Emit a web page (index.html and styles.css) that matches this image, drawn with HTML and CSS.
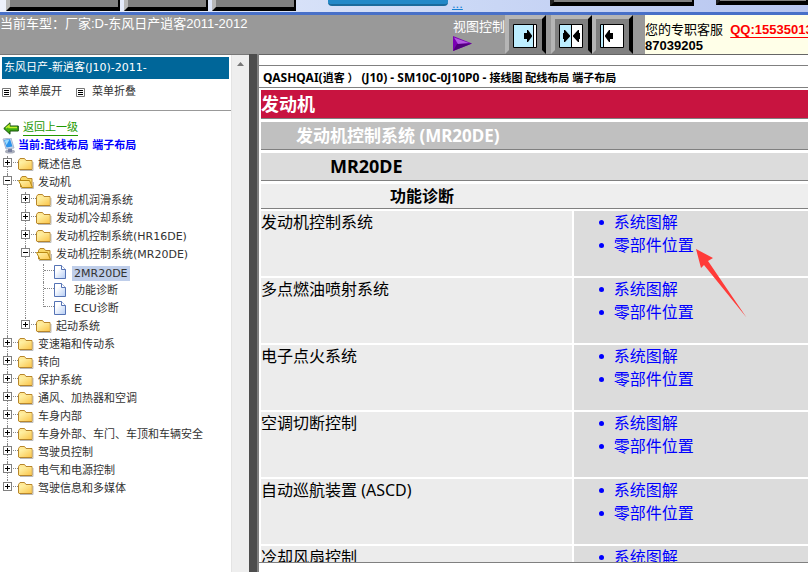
FILE: index.html
```html
<!DOCTYPE html>
<html lang="zh-CN">
<head>
<meta charset="utf-8">
<title>QASHQAI (J10) - 配线布局 端子布局</title>
<link rel="stylesheet" href="styles.css">
</head>
<body>
<svg class="defs" aria-hidden="true">
  <defs>
    <linearGradient id="gold" x1="0" y1="0" x2="1" y2="1"><stop offset="0" stop-color="#fff6b0"/><stop offset="1" stop-color="#fbc64c"/></linearGradient>
    <linearGradient id="paper" x1="0" y1="0" x2="1" y2="1"><stop offset="0.3" stop-color="#fff"/><stop offset="1" stop-color="#b4ccf4"/></linearGradient>
    <symbol id="folder" viewBox="0 0 16 16">
      <path d="M2 13.500h13V5" fill="none" stroke="#bbb"/>
      <path d="M.5 12V3.500L2 1.500h4.500L8 3.500h6v9H1z" fill="#ffe995" stroke="#b8862b"/>
      <path d="M1.500 4.500h12V12h-12z" fill="url(#gold)"/>
    </symbol>
    <symbol id="folder-open" viewBox="0 0 16 16">
      <path d="M3 13.500h12.500V7" fill="none" stroke="#bbb"/>
      <path d="M2.500 12V3.500L4 1.500h4L9.500 3.500h4.500v9z" fill="#f8d765" stroke="#b8862b"/>
      <path d="M.5 5.500h11l3 7H4z" fill="url(#gold)" stroke="#b98a14"/>
    </symbol>
    <symbol id="page" viewBox="0 0 16 16">
      <path d="M.5.500h7l4 4v9H.5z" fill="url(#paper)" stroke="#5573b5"/>
      <path d="M7.500.500v4h4" fill="#fff" stroke="#5573b5"/>
    </symbol>
    <symbol id="menu" viewBox="0 0 9 9">
      <path d="M.5.500h8v8h-8z" fill="#fff" stroke="#777"/>
      <path d="M2 2.500h5M2 4.500h5M2 6.500h5" stroke="#000"/>
    </symbol>
  </defs>
</svg>

<div class="tabs">
  <button class="tab" aria-label="菜单一"></button>
  <button class="tab tab-narrow" aria-label="菜单二"></button>
  <button class="tab tab-narrow" aria-label="菜单三"></button>
  <button class="tab-active" aria-label="当前页"></button>
  <a class="more" href="#">...</a>
  <button class="tab tab-outer" aria-label="菜单四"></button>
  <button class="tab tab-last" aria-label="菜单五"></button>
</div>

<header class="toolbar">
  <p class="model">当前车型：厂家:D-东风日产逍客2011-2012</p>
  <div class="view">
    <span>视图控制</span>
    <svg width="20" height="15" viewBox="0 0 20 15" aria-hidden="true"><path d="M0 0l19 7.500L0 15z" fill="#7a00b4"/><path d="M1 1.500l15 5.500L5 8z" fill="#b45ae0"/><path d="M0 15l4-7 15-.5z" fill="#51007c"/></svg>
  </div>
  <div class="tools">
    <button class="tool" aria-label="展开左栏"><svg width="24" height="24" viewBox="0 0 24 24"><path d="M.5.500h23v23H.5z" fill="#fff" stroke="#000"/><path d="M1 1h19v22H1z" fill="#bdeeff"/><path d="M20.500 1v22" stroke="#000"/><path d="M11 9h3V6h1l4 5.500v1L15 18h-1v-3h-3z"/></svg></button>
    <button class="tool" aria-label="左右平分"><svg width="24" height="24" viewBox="0 0 24 24"><path d="M.5.500h23v23H.5z" fill="#fff" stroke="#000"/><path d="M1 1h11v22H1z" fill="#bdeeff"/><path d="M12.500 1v22" stroke="#000"/><path d="M4 9h1V6h1l5 5.500v1L6 18H5v-3H4zM21 9h-1V6h-1l-5 5.500v1l5 5.500h1v-3h1z"/></svg></button>
    <button class="tool" aria-label="展开右栏"><svg width="24" height="24" viewBox="0 0 24 24"><path d="M.5.500h23v23H.5z" fill="#fff" stroke="#000"/><path d="M1 1h2v22H1z" fill="#bdeeff"/><path d="M3.500 1v22" stroke="#000"/><path d="M13 9h-3V6H9l-4 5.500v1L9 18h1v-3h3z"/></svg></button>
  </div>
  <div class="service">您的专职客服&nbsp; <a href="#">QQ:1553501387</a><br><b>87039205</b></div>
</header>

<div class="frames">
  <nav class="sidebar">
    <div class="panel">
      <h2 class="car">东风日产-新逍客(J10)-2011-</h2>
      <div class="actions">
        <button><svg width="9" height="9"><use href="#menu"/></svg>菜单展开</button>
        <button><svg width="9" height="9"><use href="#menu"/></svg>菜单折叠</button>
      </div>
      <a class="back" href="#"><svg width="16" height="13" viewBox="0 0 16 13"><path d="M.8 6.500L7 .8V4h8.300v5H7v3.200z" fill="#3fae14" stroke="#17500a"/><path d="M3 6l3-2.500V5.500h8" fill="none" stroke="#c4f02c" stroke-width="1.500"/></svg><span>返回上一级</span></a>
      <div class="current"><svg width="14" height="16" viewBox="0 0 14 16"><ellipse cx="8" cy="13.500" rx="5" ry="2" fill="#a9aebb"/><path d="M6 10h4v4H6z" fill="#777f9d"/><path d="M1 1l8-1 3 10-8 1z" fill="#d1daea" stroke="#a9b6d0"/><path d="M2 2l6-1 2.500 7.500-6 1z" fill="#2d94ec"/><path d="M2.500 2.500l5-1-3 5.500z" fill="#9fdcff"/></svg><b>当前:配线布局 端子布局</b></div>
      <ul class="tree">
        <li><div class="row"><button class="toggle plus" aria-label="展开"></button><svg class="icon"><use href="#folder"/></svg><a href="#">概述信息</a></div></li>
        <li><div class="row"><button class="toggle" aria-label="折叠"></button><svg class="icon"><use href="#folder-open"/></svg><a href="#">发动机</a></div>
          <ul>
            <li><div class="row"><button class="toggle plus" aria-label="展开"></button><svg class="icon"><use href="#folder"/></svg><a href="#">发动机润滑系统</a></div></li>
            <li><div class="row"><button class="toggle plus" aria-label="展开"></button><svg class="icon"><use href="#folder"/></svg><a href="#">发动机冷却系统</a></div></li>
            <li><div class="row"><button class="toggle plus" aria-label="展开"></button><svg class="icon"><use href="#folder"/></svg><a href="#">发动机控制系统(HR16DE)</a></div></li>
            <li><div class="row"><button class="toggle" aria-label="折叠"></button><svg class="icon"><use href="#folder-open"/></svg><a href="#">发动机控制系统(MR20DE)</a></div>
              <ul>
                <li><div class="row leaf"><svg class="icon"><use href="#page"/></svg><a class="selected" href="#">2MR20DE</a></div></li>
                <li><div class="row leaf"><svg class="icon"><use href="#page"/></svg><a href="#">功能诊断</a></div></li>
                <li><div class="row leaf"><svg class="icon"><use href="#page"/></svg><a href="#">ECU诊断</a></div></li>
              </ul>
            </li>
            <li><div class="row"><button class="toggle plus" aria-label="展开"></button><svg class="icon"><use href="#folder"/></svg><a href="#">起动系统</a></div></li>
          </ul>
        </li>
        <li><div class="row"><button class="toggle plus" aria-label="展开"></button><svg class="icon"><use href="#folder"/></svg><a href="#">变速箱和传动系</a></div></li>
        <li><div class="row"><button class="toggle plus" aria-label="展开"></button><svg class="icon"><use href="#folder"/></svg><a href="#">转向</a></div></li>
        <li><div class="row"><button class="toggle plus" aria-label="展开"></button><svg class="icon"><use href="#folder"/></svg><a href="#">保护系统</a></div></li>
        <li><div class="row"><button class="toggle plus" aria-label="展开"></button><svg class="icon"><use href="#folder"/></svg><a href="#">通风、加热器和空调</a></div></li>
        <li><div class="row"><button class="toggle plus" aria-label="展开"></button><svg class="icon"><use href="#folder"/></svg><a href="#">车身内部</a></div></li>
        <li><div class="row"><button class="toggle plus" aria-label="展开"></button><svg class="icon"><use href="#folder"/></svg><a href="#">车身外部、车门、车顶和车辆安全</a></div></li>
        <li><div class="row"><button class="toggle plus" aria-label="展开"></button><svg class="icon"><use href="#folder"/></svg><a href="#">驾驶员控制</a></div></li>
        <li><div class="row"><button class="toggle plus" aria-label="展开"></button><svg class="icon"><use href="#folder"/></svg><a href="#">电气和电源控制</a></div></li>
        <li><div class="row"><button class="toggle plus" aria-label="展开"></button><svg class="icon"><use href="#folder"/></svg><a href="#">驾驶信息和多媒体</a></div></li>
      </ul>
    </div>
    <div class="scrollbar"><svg width="7" height="4" viewBox="0 0 7 4"><path d="M0 4l3.500-4L7 4z" fill="#777"/></svg></div>
  </nav>
  <div class="splitter"></div>
  <main class="content">
    <p class="path"><span>QASHQAI(</span>逍客 ） <span>(J10) - SM10C-0J10P0 - </span>接线图 配线布局 端子布局</p>
    <div class="document">
      <h1>发动机</h1>
      <h2>发动机控制系统 (MR20DE)</h2>
      <h3>MR20DE</h3>
      <h4>功能诊断</h4>
      <table>
        <tr><th scope="row">发动机控制系统</th><td><ul><li><a href="#">系统图解</a></li><li class="marked"><a href="#">零部件位置</a><svg class="pointer" width="53" height="71" viewBox="0 0 53 71" aria-hidden="true"><path d="M1 1l17 9-5 3L51.500 69.500 9 17l-3 3z" fill="#ff3b38"/></svg></li></ul></td></tr>
        <tr><th scope="row">多点燃油喷射系统</th><td><ul><li><a href="#">系统图解</a></li><li><a href="#">零部件位置</a></li></ul></td></tr>
        <tr><th scope="row">电子点火系统</th><td><ul><li><a href="#">系统图解</a></li><li><a href="#">零部件位置</a></li></ul></td></tr>
        <tr><th scope="row">空调切断控制</th><td><ul><li><a href="#">系统图解</a></li><li><a href="#">零部件位置</a></li></ul></td></tr>
        <tr><th scope="row">自动巡航装置 (ASCD)</th><td><ul><li><a href="#">系统图解</a></li><li><a href="#">零部件位置</a></li></ul></td></tr>
        <tr><th scope="row">冷却风扇控制</th><td><ul><li><a href="#">系统图解</a></li><li><a href="#">零部件位置</a></li></ul></td></tr>
      </table>
    </div>
  </main>
</div>
</body>
</html>
```
FILE: styles.css
```css
* { box-sizing: border-box; }

body {
  margin: 0;
  height: 100vh;
  display: flex;
  flex-direction: column;
  overflow: hidden;
  background: #fff;
  font-family: "Noto Sans", "Noto Sans CJK SC", sans-serif;
}

h1, h2, h3, h4, p, ul { margin: 0; padding: 0; }
button { padding: 0; border: 0; background: none; font: inherit; color: inherit; }
.defs { position: absolute; width: 0; height: 0; }

/* Top tabs */
.tabs {
  flex: none;
  height: 15px;
  display: flex;
  align-items: flex-start;
  gap: 4px;
  padding-left: 6px;
  overflow: hidden;
  border-bottom: 3px solid #4870c8;
  background: linear-gradient(90deg, #edf1fc, #ccd9f6 55%, #b7c5ef);
}
.tab {
  flex: none;
  width: 114px;
  height: 11px;
  background: #808080;
  border: solid #000;
  border-width: 0 2px 4px 4px;
  border-left-color: #b8b8b8;
}
.tab-narrow { width: 84px; }
.tab-active {
  flex: none;
  width: 120px;
  height: 6px;
  margin-left: 28px;
  border-radius: 0 0 4px 4px;
  background: #2389c8;
  border-bottom: 2px solid #1b6b9d;
}
.more {
  width: 12px;
  color: #1682d4;
  font: 13px/8px "Liberation Sans", sans-serif;
}
.tab-outer { width: 144px; height: 6px; margin-left: 82px; border-left-color: #222; }
.tab-last { flex: 1 0 92px; height: 5px; margin-left: 18px; border-left-color: #222; }

/* Toolbar */
.toolbar {
  flex: none;
  height: 39px;
  display: flex;
  overflow: hidden;
  background: #999;
  color: #fff;
  font: 13px/17px "Liberation Sans", "Noto Sans CJK SC", sans-serif;
}
.model { flex: 0 0 453px; white-space: nowrap; }
.view { flex: 0 0 52px; padding-top: 3px; white-space: nowrap; }
.view svg { display: block; margin-top: 1px; }
.tools { flex: 0 0 140px; display: flex; }
.tool {
  width: 41px;
  height: 39px;
  padding: 5px 4px 2px;
  border: 4px solid #000;
  border-color: #b5b5b5 #000 #808080 #b5b5b5;
  background: #808080;
}
.tool:first-child { margin-right: 5px; }
.tool svg { display: block; }
.service {
  flex: 1;
  padding-top: 7px;
  overflow: hidden;
  background: #ffffe8;
  color: #000;
  line-height: 16px;
  white-space: nowrap;
}
.service a { color: #f00; font-weight: bold; text-underline-offset: 3px; }

/* Frames */
.frames { flex: 1; min-height: 0; display: flex; }
.sidebar { flex: 0 0 249px; display: flex; border-top: 1px solid #777; }
.panel {
  flex: 1;
  padding-top: 2px;
  color: #333;
  font: 11px/18px "DejaVu Sans", "Noto Sans CJK SC", sans-serif;
}
.car {
  margin: 0 2px;
  padding-left: 2px;
  background: #069;
  color: #fff;
  font-size: 11px;
  font-weight: normal;
  line-height: 22px;
}
.actions {
  display: flex;
  gap: 14px;
  height: 32px;
  padding: 4px 2px;
  border-bottom: 1px solid #999;
}
.actions button { display: flex; align-items: center; gap: 7px; height: 18px; }
.back { display: flex; align-items: center; gap: 4px; height: 16px; margin-top: 9px; padding-left: 3px; color: #290; text-decoration: none; }
.back span { border-bottom: 1px solid #290; line-height: 14px; }
.current { display: flex; align-items: center; gap: 2px; padding: 1px 2px; color: #00f; }
.scrollbar {
  flex: 0 0 18px;
  padding: 7px 5px;
  background: #eee;
  border-left: 1px solid #e4e4e4;
}
.scrollbar svg { display: block; }
.splitter { flex: 0 0 10px; background: #4d4d4d; border-right: 2px solid #808080; }

/* Tree */
.tree, .tree ul { list-style: none; }
.tree ul { padding-left: 18px; }
.tree li { position: relative; }
.tree li::before {
  content: "";
  position: absolute;
  top: 0;
  bottom: 0;
  left: 7px;
  border-left: 1px dotted #888;
}
.tree li:last-child::before { bottom: auto; height: 7px; }
.row { position: relative; display: flex; align-items: center; height: 18px; padding-left: 3px; white-space: nowrap; }
.row::before {
  content: "";
  position: absolute;
  left: 8px;
  top: 6px;
  width: 10px;
  border-top: 1px dotted #888;
}
.row a { color: #333; text-decoration: none; }
.row .selected { margin-left: -2px; padding: 0 2px; background: #bfceea; line-height: 15px; }
.toggle {
  position: relative;
  width: 9px;
  height: 9px;
  margin: 0 6px 5px 0;
  border: 1px solid #808080;
  background: linear-gradient(#000, #000) center / 5px 1px no-repeat #fff;
}
.plus {
  background:
    linear-gradient(#000, #000) center / 5px 1px no-repeat,
    linear-gradient(#000, #000) center / 1px 5px no-repeat,
    #fff;
}
.icon { flex: none; width: 16px; height: 16px; margin-right: 4px; }
.leaf { padding-left: 18px; }

/* Document */
.content {
  flex: 1;
  min-width: 0;
  margin-bottom: 9px;
  padding-top: 10px;
  overflow: hidden;
  border-top: 1px solid #666;
  border-bottom: 1px solid #808080;
}
.path {
  height: 23px;
  padding-left: 4px;
  border: solid #808080;
  border-width: 1px 0;
  font-size: 11px;
  font-weight: bold;
  line-height: 24px;
  white-space: nowrap;
}
.path span { font-size: 12px; }
.document { padding: 2px 0 0 2px; }
.document > :not(table) { margin-bottom: 3px; border-bottom: 1px solid #808080; }
h1 { background: #c81440; color: #fff; font-size: 18px; line-height: 28px; }
.document h2 { padding-left: 35px; background: #c0c0c0; color: #fff; font-size: 17px; line-height: 27px; }
h3 { padding-left: 69px; background: #dcdcdc; font-size: 18px; line-height: 27px; }
.document h4 { margin-bottom: 0; padding-left: 129px; background: #eee; font-size: 16px; line-height: 24px; }
table {
  width: calc(100% + 4px);
  margin: 0 -2px;
  border-spacing: 2px;
  table-layout: fixed;
  font-size: 16px;
  line-height: 23px;
}
th, td { height: 65px; padding: 0; vertical-align: top; }
th { width: 57%; background: #ececec; font-weight: normal; text-align: left; }
td { background: #dcdcdc; }
td ul { padding-left: 40px; list-style: none; }
td li { position: relative; }
td li::before {
  content: "";
  position: absolute;
  left: -15px;
  top: 9px;
  width: 5px;
  height: 5px;
  border-radius: 50%;
  background: #00f;
}
td a { color: #00f; text-decoration: none; }
.pointer { position: absolute; left: 81px; top: 14px; }
```
